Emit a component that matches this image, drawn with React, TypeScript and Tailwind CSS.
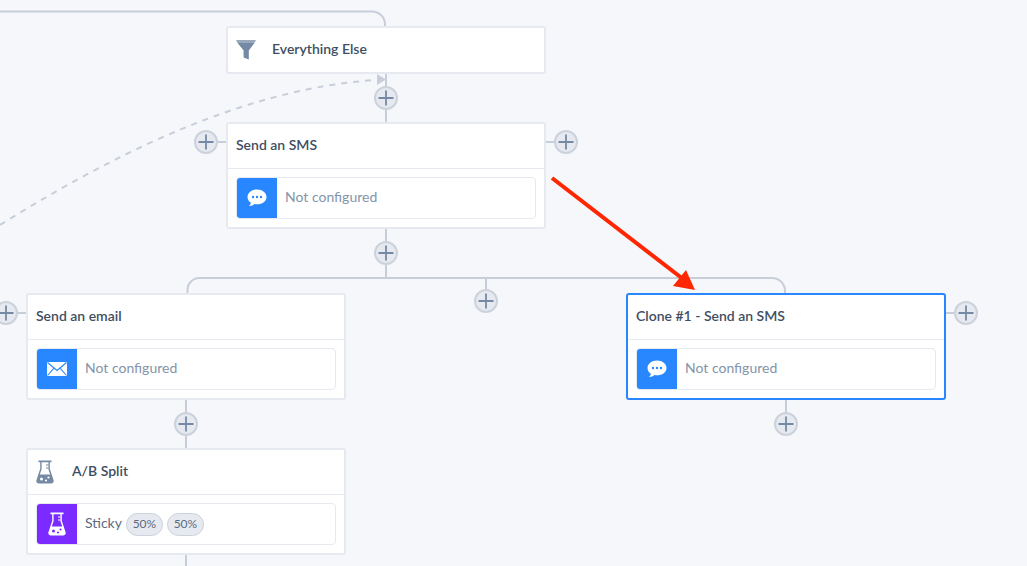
import React from "react";

const font = "font-['Lato','Liberation_Sans',sans-serif]";

function Funnel() {
  return (
    <svg width="20" height="20" viewBox="0 0 20 20" className="shrink-0">
      <path d="M0 0h20l-1.600 3H1.600z" fill="#9aa8bb" />
      <path d="M1.600 3h16.800L12.800 10.500V19.500L7.600 17.500V10.500z" fill="#748aa4" />
    </svg>
  );
}

function Flask({ fg, bg }: { fg: string; bg: string }) {
  return (
    <svg width="18" height="24" viewBox="0 0 18 24" className="shrink-0">
      <path d="M2.500 .5h13v1.800h-1.700v6.500L17.500 20c.7 2-.5 3.600-2.400 3.600H2.900C1 23.600-.2 22 .5 20L4.200 8.800V2.300H2.500z" fill={fg} />
      <path d="M5.600 2.300h6.800v6.900L14.200 14.500H3.800l1.800-5.300z" fill={bg} />
      <path d="M10 4.400h2.400v1.100H10zM10 7.400h2.400v1.100H10z" fill={fg} />
      <circle cx="5.500" cy="19" r="1.500" fill={bg} />
      <circle cx="10" cy="20.500" r="1.100" fill={bg} />
      <circle cx="12.500" cy="17.500" r="1.100" fill={bg} />
    </svg>
  );
}

function Chat() {
  return (
    <svg width="20" height="20" viewBox="0 0 20 20">
      <path d="M10 1.500c5.300 0 9.500 3.300 9.500 7.400s-4.200 7.400-9.500 7.400c-.9 0-1.700-.1-2.500-.3-1.300 1.300-3.300 2.100-5.500 2 1-.9 1.700-2 1.900-3.300C1.800 13.400.5 11.300.5 8.900.5 4.800 4.700 1.500 10 1.500z" fill="#fff" />
      <circle cx="6" cy="9" r="1.200" fill="#2887ff" />
      <circle cx="10" cy="9" r="1.200" fill="#2887ff" />
      <circle cx="14" cy="9" r="1.200" fill="#2887ff" />
    </svg>
  );
}

function Mail() {
  return (
    <svg width="20" height="14" viewBox="0 0 20 14">
      <rect width="20" height="14" fill="#fff" />
      <path d="M.5.500 10 8.500 19.500.500M.5 13.500 7 6.200M19.500 13.500 13 6.200" fill="none" stroke="#2887ff" strokeWidth="1.100" />
    </svg>
  );
}

function Plus({ x, y }: { x: number; y: number }) {
  return (
    <g>
      <circle cx={x} cy={y} r="11" fill="#e6e9ef" stroke="#ccd2dc" strokeWidth="2" />
      <path d={`M${x - 7.5} ${y}h15M${x} ${y - 7.5}v15`} stroke="#748aa4" strokeWidth="1.800" />
    </g>
  );
}

function Connectors() {
  const lines = [
    "M0 11.500H372a13 13 0 0 1 13 13V27",
    "M386 74V122",
    "M386 229V278",
    "M187.500 293V290a12 12 0 0 1 12-12H772a13 13 0 0 1 13 13V293",
    "M486 278V290",
    "M218 142H226",
    "M546 142H554",
    "M18 313H26",
    "M946 313H954",
    "M186 400V449",
    "M786 400V412",
    "M186 555V566",
  ];
  return (
    <svg width="1027" height="566" viewBox="0 0 1027 566" className="absolute inset-0">
      {lines.map((d) => (
        <path key={d} d={d} fill="none" stroke="#c8ced9" strokeWidth="2" />
      ))}
      <path d="M0 225C120 150 250 88 376 80" fill="none" stroke="#c8ced9" strokeWidth="2" strokeDasharray="6 6" />
      <path d="M377 74l9 5.500-9 5.500z" fill="#c8ced9" />
    </svg>
  );
}

function PlusLayer() {
  const spots = [
    [386, 98],
    [206, 142],
    [566, 142],
    [386, 253],
    [486, 301],
    [6, 313],
    [966, 313],
    [186, 424],
    [786, 424],
  ];
  return (
    <svg width="1027" height="566" viewBox="0 0 1027 566" className="absolute inset-0">
      {spots.map(([x, y]) => (
        <Plus key={`${x}-${y}`} x={x} y={y} />
      ))}
    </svg>
  );
}

function Arrow() {
  return (
    <svg width="1027" height="566" viewBox="0 0 1027 566" className="absolute inset-0">
      <path d="M552 178 683 279" stroke="#ff2600" strokeWidth="4" fill="none" />
      <path d="M695 290 686 270 673 286z" fill="#ff2600" />
    </svg>
  );
}

type NodeProps = {
  pos: string;
  title: string;
  selected?: boolean;
  headIcon?: React.ReactNode;
  iconBg?: string;
  icon: React.ReactNode;
  children: React.ReactNode;
};

function Card({ pos, title, selected, headIcon, iconBg = "bg-[#2887ff]", icon, children }: NodeProps) {
  return (
    <div
      className={`absolute ${pos} w-[320px] h-[107px] bg-white rounded-[3px] border-2 flex flex-col ${
        selected ? "border-[#2887ff]" : "border-[#e6e9f0]"
      }`}
    >
      <div className="h-[44px] flex items-center px-2 border-b border-[#e6e9f0] box-content">
        {headIcon && <div className="w-9 flex">{headIcon}</div>}
        <span className="pb-[4px] text-[14px] font-semibold text-[#414e62]">{title}</span>
      </div>
      <div className="flex-1 px-2 pt-2">
        <div className="h-[42px] flex items-center border border-[#e6e9f0] rounded-[4px]">
          <div className={`w-10 h-10 flex items-center justify-center rounded-l-[3px] ${iconBg}`}>{icon}</div>
          <div className="pl-2 flex items-center gap-[4px] text-[14px]">{children}</div>
        </div>
      </div>
    </div>
  );
}

function Pill({ children }: { children: React.ReactNode }) {
  return (
    <span className="h-[23px] w-[37px] flex items-center justify-center rounded-full bg-[#e6e9ef] border border-[#ccd2dc] text-[12px] text-[#5c6b80]">
      {children}
    </span>
  );
}

export default function App() {
  const muted = <span className="pb-[4px] text-[#8494a9]">Not configured</span>;
  return (
    <div className={`relative w-[1027px] h-[566px] overflow-hidden bg-[#f6f7fb] ${font}`}>
      <Connectors />

      <div className="absolute left-[226px] top-[26px] w-[320px] h-[48px] bg-white rounded-[3px] border-2 border-[#e6e9f0] flex items-center px-2">
        <div className="w-9 flex">
          <Funnel />
        </div>
        <span className="pb-[4px] text-[14px] font-semibold text-[#414e62]">Everything Else</span>
      </div>

      <Card pos="left-[226px] top-[122px]" title="Send an SMS" icon={<Chat />}>
        {muted}
      </Card>
      <Card pos="left-[26px] top-[293px]" title="Send an email" icon={<Mail />}>
        {muted}
      </Card>
      <Card pos="left-[626px] top-[293px]" title="Clone #1 - Send an SMS" selected icon={<Chat />}>
        {muted}
      </Card>
      <Card
        pos="left-[26px] top-[448px]"
        title="A/B Split"
        headIcon={<Flask fg="#748aa4" bg="#ffffff" />}
        iconBg="bg-[#7b2bff]"
        icon={<Flask fg="#ffffff" bg="#7b2bff" />}
      >
        <span className="pb-[4px] text-[#5c6b80]">Sticky</span>
        <Pill>50%</Pill>
        <Pill>50%</Pill>
      </Card>

      <PlusLayer />
      <Arrow />
    </div>
  );
}
